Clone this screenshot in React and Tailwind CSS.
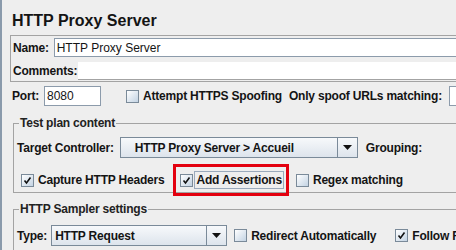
import React from 'react';

function Check({ checked }) {
  return (
    <span className="w-[13px] h-[13px] shrink-0 border border-[#7a8a99] bg-gradient-to-br from-white to-[#c3d3e3] flex items-center justify-center">
      {checked && (
        <svg width="9" height="9" viewBox="0 0 9 9">
          <path d="M1.5 4.5 L3.5 7 L7.5 1.5" fill="none" stroke="#111" strokeWidth="1.6" />
        </svg>
      )}
    </span>
  );
}

function Combo({ text, width, indent }) {
  return (
    <div className={`${width} h-[21px] shrink-0 border border-[#7a8a99] bg-gradient-to-b from-[#f7f9fb] to-[#dde4ec] flex`}>
      <div className={`flex-1 flex items-center font-bold tracking-[-0.2px] ${indent}`}>{text}</div>
      <div className="w-[20px] border-l border-[#7a8a99] flex items-center justify-center">
        <svg width="9" height="5" viewBox="0 0 9 5">
          <path d="M0 0 H9 L4.5 5 Z" fill="#111" />
        </svg>
      </div>
    </div>
  );
}

function Field({ className, children }) {
  return (
    <div className={`shrink-0 bg-white border border-[#8c9bab] flex items-center pl-[2px] ${className}`}>
      {children}
    </div>
  );
}

export default function App() {
  return (
    <div className="w-[456px] h-[250px] overflow-hidden bg-[#eeeeee] border-l-2 border-[#8a9aab] pl-[8px] pt-[12px] font-['Liberation_Sans',Arial,sans-serif] text-[12px] leading-[14px] text-[#141414]">
      <h1 className="ml-[2px] text-[16px] leading-[18px] font-bold">HTTP Proxy Server</h1>

      {/* Name / comments */}
      <div className="mt-[5px] w-[520px] border border-[#a3a3a3] pt-[2px] pb-[1px]">
        <div className="flex items-center pl-[2px]">
          <span className="font-bold tracking-[-0.2px]">Name:</span>
          <Field className="ml-[5px] flex-1 h-[19px] border-[#7a8a99]">HTTP Proxy Server</Field>
        </div>
        <div className="flex items-center pl-[2px] mt-[5px]">
          <span className="font-bold tracking-[-0.2px]">Comments:</span>
          <div className="ml-[1px] flex-1 h-[18px] bg-white border-b border-[#a3a3a3]" />
        </div>
      </div>

      {/* Port */}
      <div className="mt-[4px] flex items-center whitespace-nowrap">
        <span className="ml-[2px] font-bold tracking-[-0.2px]">Port:</span>
        <Field className="ml-[5px] w-[57px] h-[20px]">8080</Field>
        <span className="ml-[25px]"><Check /></span>
        <span className="ml-[4px] font-bold tracking-[-0.2px]">Attempt HTTPS Spoofing</span>
        <span className="ml-[7px] font-bold tracking-[-0.2px]">Only spoof URLs matching:</span>
        <Field className="ml-[7px] w-[60px] h-[20px]" />
      </div>

      {/* Test plan content */}
      <fieldset className="mt-[10px] ml-[3px] w-[520px] border border-[#a3a3a3] pb-[3px]">
        <legend className="ml-[5px] px-[1px] font-bold tracking-[-0.2px] text-[#222]">Test plan content</legend>
        <div className="mt-[7px] pl-[3px] flex items-center whitespace-nowrap">
          <span className="font-bold tracking-[-0.2px]">Target Controller:</span>
          <span className="ml-[6px]">
            <Combo text="HTTP Proxy Server > Accueil" width="w-[238px]" indent="pl-[14px]" />
          </span>
          <span className="ml-[8px] font-bold tracking-[-0.2px]">Grouping:</span>
        </div>
        <div className="mt-[13px] h-[18px] pl-[7px] flex items-center whitespace-nowrap">
          <Check checked />
          <span className="ml-[4px] font-bold tracking-[-0.2px]">Capture HTTP Headers</span>
          <div className="relative ml-[16px] flex items-center">
            <Check checked />
            <span className="ml-[1px] px-[1px] h-[18px] flex items-center border border-[#9aa9bb] font-bold tracking-[-0.2px]">Add Assertions</span>
            <div className="absolute -left-[7px] -right-[5px] -top-[7px] -bottom-[7px] border-[3px] border-[#e3000f]" />
          </div>
          <span className="ml-[12px]"><Check /></span>
          <span className="ml-[4px] font-bold tracking-[-0.2px]">Regex matching</span>
        </div>
      </fieldset>

      {/* HTTP Sampler settings */}
      <fieldset className="mt-[9px] ml-[3px] w-[520px] border border-[#a3a3a3] pb-[4px]">
        <legend className="ml-[5px] px-[1px] font-bold tracking-[-0.2px] text-[#222]">HTTP Sampler settings</legend>
        <div className="mt-[9px] pl-[3px] flex items-center whitespace-nowrap">
          <span className="font-bold tracking-[-0.2px]">Type:</span>
          <span className="ml-[4px]">
            <Combo text="HTTP Request" width="w-[176px]" indent="pl-[3px]" />
          </span>
          <span className="ml-[7px]"><Check /></span>
          <span className="ml-[4px] font-bold tracking-[-0.2px]">Redirect Automatically</span>
          <span className="ml-[19px]"><Check checked /></span>
          <span className="ml-[4px] font-bold tracking-[-0.2px]">Follow Redirects</span>
        </div>
      </fieldset>
    </div>
  );
}
